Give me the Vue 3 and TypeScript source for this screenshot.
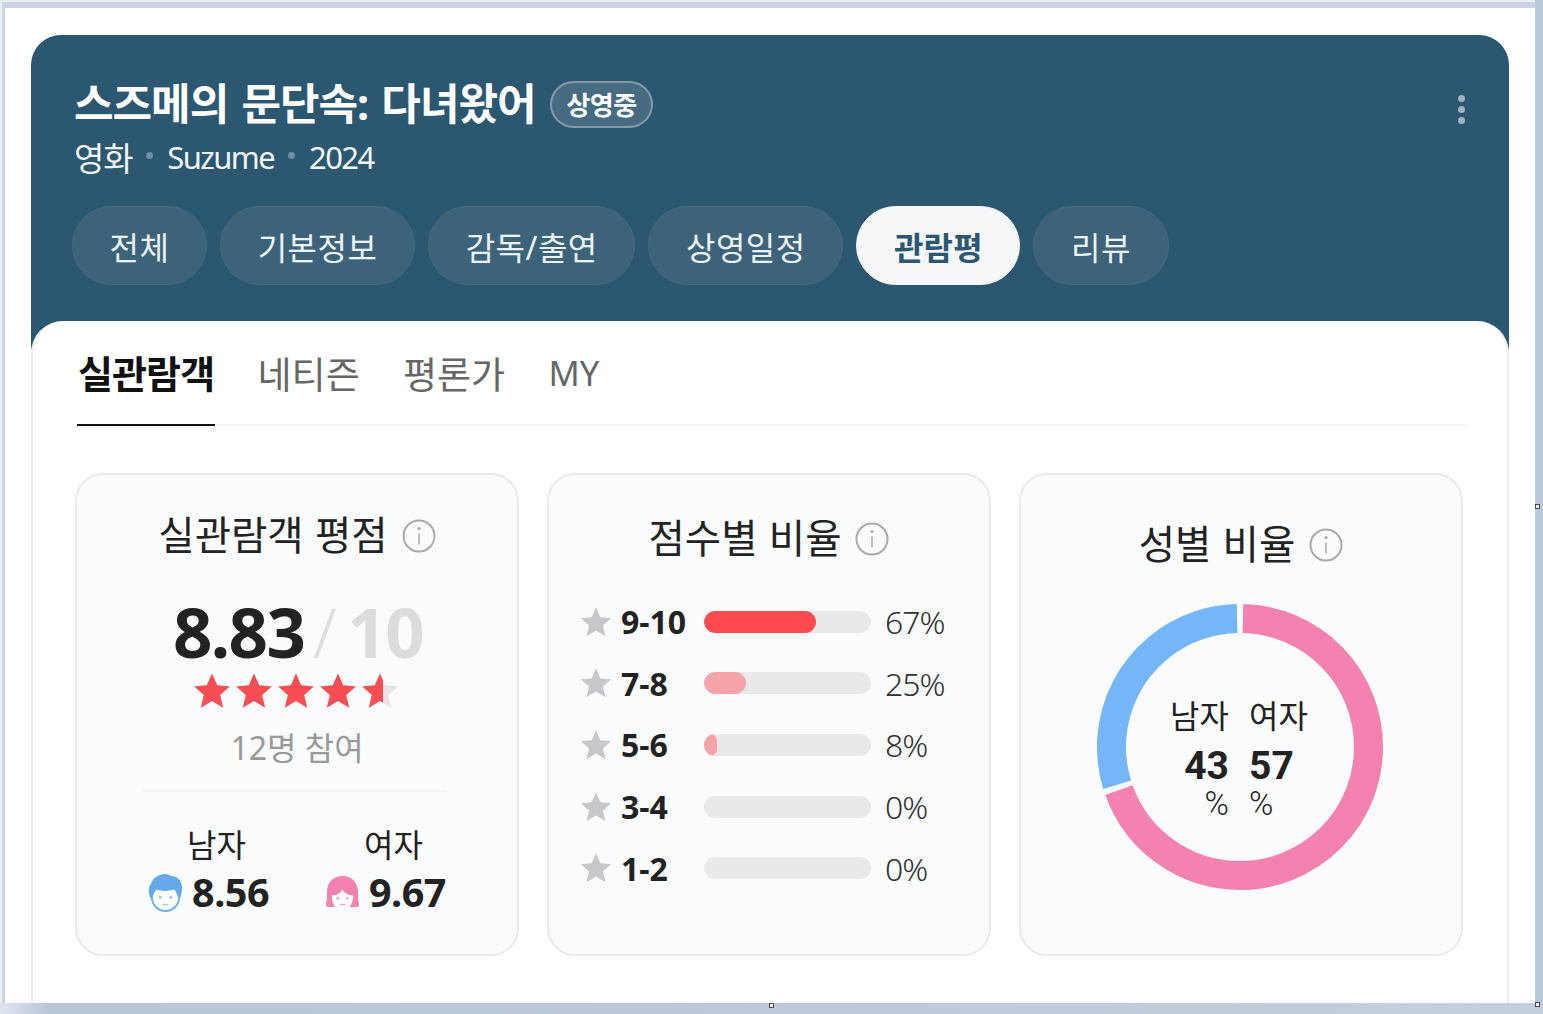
<script setup lang="ts">
const tabs = ['전체', '기본정보', '감독/출연', '상영일정', '관람평', '리뷰']
const subTabs = ['실관람객', '네티즌', '평론가', 'MY']
const ratings = [
  { label: '9-10', pct: 67, cls: 'strong' },
  { label: '7-8', pct: 25, cls: 'soft' },
  { label: '5-6', pct: 8, cls: 'soft' },
  { label: '3-4', pct: 0, cls: 'soft' },
  { label: '1-2', pct: 0, cls: 'soft' },
]
const STAR = 'M12 1.5l3.1 7.1 7.6.7-5.8 5.1 1.8 7.6L12 18l-6.7 4 1.8-7.6-5.8-5.1 7.6-.7z'
const R = 128.5
const C = 2 * Math.PI * R
const pinkShare = 0.699
const gap = 6
const pinkDash = `${C * pinkShare - gap} ${C}`
const blueDash = `${C * (1 - pinkShare) - gap} ${C}`
const blueRotate = pinkShare * 360
</script>

<template>
  <div class="page">
    <div class="sheet">
      <section class="hero">
        <div class="hero-top">
          <div>
            <div class="title-row">
              <h1>스즈메의 문단속: 다녀왔어</h1>
              <span class="badge">상영중</span>
            </div>
            <div class="meta">
              <span class="ko">영화</span><i class="dot"></i><span>Suzume</span><i class="dot"></i><span>2024</span>
            </div>
          </div>
          <div class="kebab"><i></i><i></i><i></i></div>
        </div>
        <nav class="pills">
          <span v-for="t in tabs" :key="t" class="pill" :class="{ on: t === '관람평' }">{{ t }}</span>
        </nav>
      </section>

      <section class="panel">
        <div class="subtabs">
          <span v-for="(t, i) in subTabs" :key="t" class="subtab" :class="{ on: i === 0, latin: t === 'MY' }">{{ t }}</span>
        </div>

        <div class="cards">
          <article class="card c1">
            <h2>실관람객 평점
              <svg class="info" viewBox="0 0 34 34"><circle cx="17" cy="17" r="15.5" /><path d="M17 14.5v11" /><circle class="idot" cx="17" cy="9.5" r="1.6" /></svg>
            </h2>
            <div class="score"><b>8.83</b><em>/</em><strong>10</strong></div>
            <div class="stars">
              <div class="star-row gray"><svg v-for="n in 5" :key="n" viewBox="0 0 24 24"><path :d="STAR" /></svg></div>
              <div class="star-row red" :style="{ width: '191px' }"><svg v-for="n in 5" :key="n" viewBox="0 0 24 24"><path :d="STAR" /></svg></div>
            </div>
            <p class="count">12명 참여</p>
            <hr />
            <div class="genders">
              <div class="g">
                <span class="glabel">남자</span>
                <div class="gv">
                  <svg viewBox="0 0 36 40" class="face">
                    <ellipse cx="18" cy="25" rx="14" ry="14" fill="#fff" stroke="#6fb0ee" stroke-width="2" />
                    <path d="M3 26C0 21 0 15 3 11 5 5 11 1 18 1c2 0 4 1 6 2 6 0 11 5 11 12 0 4-1 8-2 11h-2c-1-4-2-7-4-9-6 2-13 2-18 0-2 2-4 5-5 9z" fill="#66a9ea" />
                    <circle cx="12.500" cy="25" r="1.600" fill="#9cc8f2" /><circle cx="23.500" cy="25" r="1.600" fill="#9cc8f2" />
                    <path d="M15 32q3 1.500 6 0" fill="none" stroke="#9cc8f2" stroke-width="1.300" />
                  </svg>
                  <b>8.56</b>
                </div>
              </div>
              <div class="g">
                <span class="glabel">여자</span>
                <div class="gv">
                  <svg viewBox="0 0 36 40" class="face">
                    <path d="M18 3C8 3 2 10 2 20c0 5 0 9-1 12 0 2 1 3 3 3h28c2 0 3-1 3-3-1-3-1-7-1-12 0-10-6-17-16-17z" fill="#f482b0" />
                    <path d="M7 23c5 0 9-2 11-6 2 4 6 6 11 6 0 9-5 16-11 16S7 32 7 23z" fill="#fff" />
                    <circle cx="13" cy="26" r="1.500" fill="#f5a3c4" /><circle cx="23" cy="26" r="1.500" fill="#f5a3c4" />
                    <path d="M15 32q3 1.500 6 0" fill="none" stroke="#f5a3c4" stroke-width="1.300" />
                  </svg>
                  <b>9.67</b>
                </div>
              </div>
            </div>
          </article>

          <article class="card c2">
            <h2>점수별 비율
              <svg class="info" viewBox="0 0 34 34"><circle cx="17" cy="17" r="15.5" /><path d="M17 14.500v11" /><circle class="idot" cx="17" cy="9.500" r="1.600" /></svg>
            </h2>
            <ul class="rates">
              <li v-for="r in ratings" :key="r.label">
                <svg class="rstar" viewBox="0 0 24 24"><path :d="STAR" /></svg>
                <b>{{ r.label }}</b>
                <div class="track"><div class="fill" :class="r.cls" :style="{ width: r.pct + '%' }"></div></div>
                <span>{{ r.pct }}%</span>
              </li>
            </ul>
          </article>

          <article class="card c3">
            <h2>성별 비율
              <svg class="info" viewBox="0 0 34 34"><circle cx="17" cy="17" r="15.500" /><path d="M17 14.500v11" /><circle class="idot" cx="17" cy="9.500" r="1.600" /></svg>
            </h2>
            <div class="donut">
              <svg viewBox="0 0 288 288">
                <g transform="rotate(-90 144 144)" fill="none" stroke-width="29">
                  <circle cx="144" cy="144" :r="R" stroke="#f482b0" :stroke-dasharray="pinkDash" :stroke-dashoffset="-gap / 2" />
                  <circle cx="144" cy="144" :r="R" stroke="#74b6f8" :stroke-dasharray="blueDash" :stroke-dashoffset="-gap / 2" :transform="`rotate(${blueRotate} 144 144)`" />
                </g>
              </svg>
              <div class="donut-text">
                <div class="male"><span>남자</span><b>43</b><span class="p">%</span></div>
                <div class="female"><span>여자</span><b>57</b><span class="p">%</span></div>
              </div>
            </div>
          </article>
        </div>
      </section>
    </div>
    <i class="handle h1"></i><i class="handle h2"></i><i class="handle h3"></i>
  </div>
</template>

<style scoped>
* { box-sizing: border-box; }
.page {
  position: relative;
  width: 1543px;
  height: 1014px;
  overflow: hidden;
  padding: 8px 8px 11px 5px;
  background:
    linear-gradient(90deg, #e9edf4 0 2px, transparent 2px calc(100% - 8px), #bcc8dc calc(100% - 8px)),
    linear-gradient(#e9edf4 0 2px, #ccd4e4 2px);
  font-family: "Noto Sans", "Noto Sans CJK KR", sans-serif;
  color: #222;
}
.page::after {
  content: "";
  position: absolute;
  left: 0; right: 0; bottom: 0;
  height: 11px;
  background: linear-gradient(90deg, #dfe4f0 0, #b9c5d9 50px, #c3cede 100%);
}
.sheet {
  height: 100%;
  background: #fff;
  padding: 27px 26px 0;
  overflow: hidden;
  display: flex;
  flex-direction: column;
}
.hero {
  height: 314px;
  flex: none;
  background: #2c5770;
  border-radius: 30px 30px 0 0;
  padding: 44px 44px 0 41px;
  color: #fff;
}
.hero-top { display: flex; justify-content: space-between; }
.title-row { display: flex; align-items: center; gap: 14px; height: 50px; padding-left: 2px; }
h1 { margin: 0; width: 462px; font-size: 43px; font-weight: 700; line-height: 50px; letter-spacing: -1px; word-spacing: 3px; white-space: nowrap; }
.badge {
  width: 103px; height: 47px;
  display: flex; align-items: center; justify-content: center;
  border: 2px solid rgba(255,255,255,.32);
  background: rgba(255,255,255,.13);
  border-radius: 24px;
  font-size: 26px; font-weight: 700; letter-spacing: -.6px;
}
.meta { display: flex; align-items: center; gap: 14px; font-size: 31px; height: 44px; margin-top: 6px; padding-left: 2px; letter-spacing: -1.6px; color: #f3f6f8; }
.meta .ko { font-size: 33px; letter-spacing: -1.2px; }
.dot { width: 7px; height: 7px; border-radius: 50%; background: #6f8fa3; margin-top: -4px; }
.kebab { display: flex; flex-direction: column; gap: 4px; padding-top: 16px; }
.kebab i { width: 7px; height: 7px; border-radius: 50%; background: #9fb3c1; }
.pills { display: flex; gap: 13px; margin-top: 27px; }
.pill {
  height: 79px;
  padding: 0 36.6px;
  display: flex; align-items: center;
  border-radius: 40px;
  background: #3c6379;
  border: 1px solid #446b80;
  font-size: 32px;
  letter-spacing: .5px;
  color: #eef3f6;
  white-space: nowrap;
}
.pill.on { background: #f5f7f9; border-color: #f5f7f9; color: #2c5770; font-weight: 700; letter-spacing: .2px; }
.panel {
  flex: 1;
  min-height: 0;
  margin-top: -28px;
  background: #fff;
  border: solid #ececee;
  border-width: 2px 2px 0;
  border-top-color: #fff;
  border-radius: 32px 32px 0 0;
  padding: 0 42px;
}
.subtabs { display: flex; gap: 41.3px; height: 103px; margin-left: 2px; border-bottom: 2px solid #f2f3f5; align-items: stretch; }
.subtab { display: flex; align-items: center; font-size: 37px; color: #666; height: 103px; padding: 0 1px 4px; margin-bottom: -2px; white-space: nowrap; }
.subtab.latin { font-size: 34.5px; }
.subtab.on { color: #111; font-weight: 700; font-size: 38px; letter-spacing: -.9px; border-bottom: 2px solid #111; }
.cards { display: grid; grid-template-columns: 444px 444px 444px; gap: 28px; margin-top: 47px; }
.card {
  height: 483px;
  background: #fafbfd;
  border: 2px solid #e8eaed;
  border-radius: 28px;
  display: flex; flex-direction: column; align-items: center;
}
h2 { margin: 0; display: flex; align-items: center; gap: 14px; font-size: 39.5px; font-weight: 400; line-height: 44px; word-spacing: 1px; color: #222; white-space: nowrap; }
.info { width: 34px; height: 34px; fill: none; stroke: #aaa; stroke-width: 2; margin-top: 2px; }
.info path { stroke-width: 1.500; }
.info .idot { fill: #aaa; stroke: none; }
.c1 h2 { margin-top: 38px; }
.c2 h2 { margin-top: 41px; }
.c3 h2 { margin-top: 47px; }
.score { display: flex; align-items: baseline; gap: 13px; margin: 32px 0 0 2px; height: 84px; line-height: 84px; }
.score b { font-size: 69px; font-weight: 700; letter-spacing: -1.6px; color: #222; }
.score em { width: 15px; display: flex; justify-content: center; font-style: normal; font-size: 68px; font-weight: 300; color: #dedee1; }
.score strong { font-size: 69px; font-weight: 700; letter-spacing: -1.6px; color: #dcdcdf; margin-left: 2px; }
.stars { position: relative; width: 206px; height: 40px; margin: -2px 0 0 -4px; }
.star-row { position: absolute; left: 0; top: 0; display: flex; gap: 2px; overflow: hidden; height: 40px; }
.star-row svg { flex: none; width: 40px; height: 40px; }
.gray { fill: #e4e4e6; width: 210px; }
.red { fill: #f84d52; }
.count { margin: 15px 0 0; font-size: 32px; line-height: 44px; color: #999; }
hr { width: 304px; height: 2px; border: 0; background: #f1f2f4; margin: 20px 4px 0 0; }
.genders { display: flex; gap: 56px; margin-top: 31px; }
.g { display: flex; flex-direction: column; align-items: center; font-size: 32px; line-height: 44px; color: #222; }
.glabel { margin-left: 16px; }
.gv { display: flex; align-items: center; gap: 9px; height: 50px; }
.gv b { font-size: 39.5px; font-weight: 700; letter-spacing: -.5px; }
.face { width: 35px; height: 39px; }
.rates { list-style: none; width: 100%; margin: 31px 0 0; padding: 0 0 0 30px; display: flex; flex-direction: column; }
.rates li { display: flex; align-items: center; height: 61.6px; }
.rstar { width: 34px; height: 34px; fill: #c8c8cc; flex: none; }
.rates b { width: 91px; padding-left: 8px; font-size: 32px; font-weight: 700; }
.track { width: 167px; height: 22px; background: #e9e9ec; border-radius: 11px; overflow: hidden; flex: none; }
.fill { height: 100%; border-radius: 11px; }
.fill.strong { background: #ff4b50; }
.fill.soft { background: #f5a3a8; }
.rates span { margin-left: 14px; font-size: 32px; font-weight: 300; letter-spacing: -1px; color: #333; }
.donut { position: relative; width: 288px; height: 288px; margin: 37px 2px 0 0; }
.donut svg { display: block; width: 288px; height: 288px; }
.donut-text { position: absolute; inset: 0; display: flex; justify-content: center; gap: 20px; padding: 91px 2px 0 0; }
.donut-text div { display: flex; flex-direction: column; width: 59px; font-size: 32px; line-height: 44px; }
.donut-text .male { align-items: flex-end; }
.donut-text .female { align-items: flex-start; }
.donut-text b { font-family: Roboto, "Noto Sans", sans-serif; font-size: 39px; line-height: 48px; margin-top: 4px; }
.donut-text .p { font-family: Roboto, "Noto Sans", sans-serif; line-height: 24px; font-weight: 300; font-size: 33px; margin-top: 2px; }
.handle { position: absolute; width: 5px; height: 5px; background: #fff; border: 1px solid #445; z-index: 2; }
.h1 { left: 1535px; top: 504px; }
.h2 { left: 769px; top: 1003px; }
.h3 { left: 1535px; top: 1002px; }
</style>
